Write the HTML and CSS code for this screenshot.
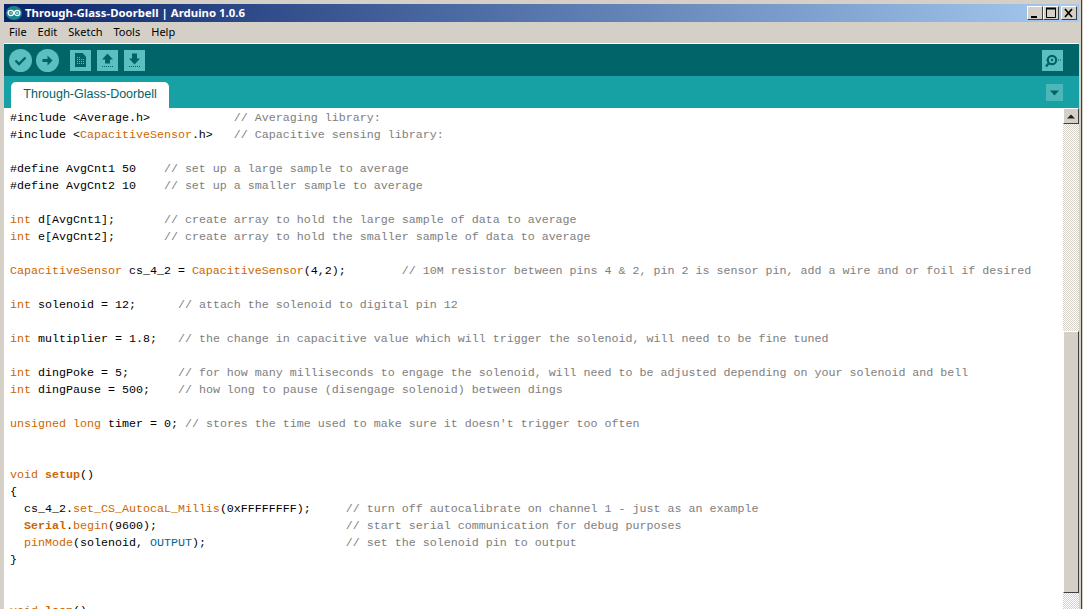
FILE: index.html
```html
<!DOCTYPE html>
<html lang="en">
<head>
<meta charset="utf-8">
<title>Through-Glass-Doorbell | Arduino 1.0.6</title>
<link rel="stylesheet" href="styles.css">
</head>
<body>
<div class="window">
  <header class="titlebar">
    <svg class="app-icon" viewBox="0 0 16 14" width="16" height="14"><ellipse cx="8" cy="7" rx="8" ry="7" fill="#17868a"/><circle cx="4.800" cy="7" r="2.700" fill="none" stroke="#fff" stroke-width="1.200"/><circle cx="11.200" cy="7" r="2.700" fill="none" stroke="#fff" stroke-width="1.200"/><path d="M3.500 7h2.600M9.900 7h2.600M11.200 5.700v2.600" stroke="#fff" stroke-width=".8"/></svg>
    <span class="title">Through-Glass-Doorbell | Arduino 1.0.6</span>
    <div class="win-btns">
      <button class="win-btn"><svg viewBox="0 0 16 14" width="16" height="14"><rect x="4" y="10" width="6" height="2" fill="#000"/></svg></button>
      <button class="win-btn"><svg viewBox="0 0 16 14" width="16" height="14"><path d="M3.500 2.500h9v9h-9z" fill="none" stroke="#000"/><path d="M3 2.500h10" stroke="#000" stroke-width="2"/></svg></button>
      <button class="win-btn win-close"><svg viewBox="0 0 16 14" width="16" height="14"><path d="M4 3l7 8M11 3l-7 8" stroke="#000" stroke-width="1.700"/></svg></button>
    </div>
  </header>
  <nav class="menubar">
    <span class="menu-item">File</span>
    <span class="menu-item">Edit</span>
    <span class="menu-item">Sketch</span>
    <span class="menu-item">Tools</span>
    <span class="menu-item">Help</span>
  </nav>
  <div class="toolbar">
    <div class="tool tool-round"><svg viewBox="0 0 23 23" width="23" height="23"><path d="M6.500 11.500l3.500 3.500 6.500-6.500" fill="none" stroke="#00636a" stroke-width="2.400"/></svg></div>
    <div class="tool tool-round"><svg viewBox="0 0 23 23" width="23" height="23"><path d="M6.500 10h5V6.500l5 5-5 5V13h-5z" fill="#00636a"/></svg></div>
    <div class="tool tool-square tool-first"><svg viewBox="0 0 21 21" width="21" height="21"><path d="M5 3h7.500L16 6.500V17H5z" fill="#00636a"/><path d="M7 7.500h1M9 7.500h1M7 9.500h1M9 9.500h1M11 9.500h1M13 9.500h1M7 11.500h1M9 11.500h1M11 11.500h1M13 11.500h1M7 13.500h1M9 13.500h1M11 13.500h1M13 13.500h1" stroke="#5bbfc0"/></svg></div>
    <div class="tool tool-square"><svg viewBox="0 0 21 21" width="21" height="21"><path d="M10.500 3.500l5.500 6h-3v4H8v-4H5z" fill="#00636a"/><path d="M5 16.500h11" stroke="#00636a" stroke-dasharray="1 1"/></svg></div>
    <div class="tool tool-square"><svg viewBox="0 0 21 21" width="21" height="21"><path d="M8 3.500h5v5h3l-5.500 6-5.500-6h3z" fill="#00636a"/><path d="M5 16.500h11" stroke="#00636a" stroke-dasharray="1 1"/></svg></div>
    <div class="tool tool-square tool-serial"><svg viewBox="0 0 21 21" width="21" height="21"><circle cx="10" cy="10" r="4.200" fill="none" stroke="#00636a" stroke-width="2.200"/><circle cx="10" cy="10" r="1.200" fill="#00636a"/><path d="M7 13l-3 3.500" stroke="#00636a" stroke-width="2.400"/><path d="M4 10h1M16 10h1M18 10h1" stroke="#00636a"/></svg></div>
  </div>
  <div class="tabbar">
    <div class="tab">Through-Glass-Doorbell</div>
    <div class="tab-menu"><svg viewBox="0 0 17 17" width="17" height="17"><path d="M4 6.500h9l-4.500 5z" fill="#00636a"/></svg></div>
  </div>
  <main class="editor">
<pre class="code">#include &lt;Average.h&gt;            <span class="c">// Averaging library:</span>
#include &lt;<span class="k">CapacitiveSensor</span>.h&gt;   <span class="c">// Capacitive sensing library:</span>

#define AvgCnt1 50    <span class="c">// set up a large sample to average</span>
#define AvgCnt2 10    <span class="c">// set up a smaller sample to average</span>

<span class="k">int</span> d[AvgCnt1];       <span class="c">// create array to hold the large sample of data to average</span>
<span class="k">int</span> e[AvgCnt2];       <span class="c">// create array to hold the smaller sample of data to average</span>

<span class="k">CapacitiveSensor</span> cs_4_2 = <span class="k">CapacitiveSensor</span>(4,2);        <span class="c">// 10M resistor between pins 4 &amp; 2, pin 2 is sensor pin, add a wire and or foil if desired</span>

<span class="k">int</span> solenoid = 12;      <span class="c">// attach the solenoid to digital pin 12</span>

<span class="k">int</span> multiplier = 1.8;   <span class="c">// the change in capacitive value which will trigger the solenoid, will need to be fine tuned</span>

<span class="k">int</span> dingPoke = 5;       <span class="c">// for how many milliseconds to engage the solenoid, will need to be adjusted depending on your solenoid and bell</span>
<span class="k">int</span> dingPause = 500;    <span class="c">// how long to pause (disengage solenoid) between dings</span>

<span class="k">unsigned</span> <span class="k">long</span> timer = 0; <span class="c">// stores the time used to make sure it doesn't trigger too often</span>


<span class="k">void</span> <span class="k b">setup</span>()
{
  cs_4_2.<span class="k">set_CS_AutocaL_Millis</span>(0xFFFFFFFF);     <span class="c">// turn off autocalibrate on channel 1 - just as an example</span>
  <span class="k b">Serial</span>.<span class="k">begin</span>(9600);                           <span class="c">// start serial communication for debug purposes</span>
  <span class="k">pinMode</span>(solenoid, <span class="o">OUTPUT</span>);                    <span class="c">// set the solenoid pin to output</span>
}


<span class="k">void</span> <span class="k b">loop</span>()</pre>
    <div class="scrollbar">
      <button class="scroll-up"><svg viewBox="0 0 16 15" width="16" height="15"><path d="M4 9.500h8l-4-4z" fill="#222"/></svg></button>
      <div class="track track-top"></div>
      <div class="thumb"></div>
      <div class="track track-bottom"></div>
    </div>
  </main>
</div>
</body>
</html>
```
FILE: styles.css
```css
* { box-sizing: border-box; }
html, body { margin: 0; height: 100%; overflow: hidden; background: #d4d0c8; }
.window {
  width: 1083px;
  height: 609px;
  padding: 4px 4px 0 4px;
  display: flex;
  flex-direction: column;
  background: #d4d0c8;
  position: relative;
  overflow: hidden;
}
.window::after {
  content: "";
  position: absolute;
  top: 0; bottom: 0; right: 1px;
  width: 1px;
  background: #404040;
}
.titlebar {
  height: 18px;
  flex: none;
  display: flex;
  align-items: center;
  padding-left: 2px;
  background: linear-gradient(90deg, #0a246a 0%, #a6caf0 100%);
  color: #fff;
}
.app-icon { flex: none; }
.title {
  margin: 0 0 1px 3px;
  font: bold 11.4px "Noto Sans", sans-serif;
}
.win-btns { margin-left: auto; margin-right: 2px; display: flex; gap: 0; }
.win-btn {
  width: 16px; height: 14px; padding: 0;
  border: 1px solid;
  border-color: #fff #404040 #404040 #fff;
  background: #d4d0c8;
  display: block;
  overflow: hidden;
}
.win-btn svg { display: block; margin: -1px; }
.win-close { margin-left: 2px; }
.menubar {
  height: 21px;
  flex: none;
  display: flex;
  align-items: center;
  padding: 0 0 2px 5px;
  gap: 11px;
  font: 11px "Noto Sans", sans-serif;
  color: #000;
}
.toolbar {
  height: 33px;
  flex: none;
  border-top: 1px solid #fff;
  background: #006468;
  display: flex;
  align-items: center;
  padding-left: 5px;
}
.tool { background: #5bbfc0; flex: none; }
.tool svg { display: block; }
.tool-round { width: 23px; height: 23px; border-radius: 50%; margin-right: 4px; }
.tool-square { width: 21px; height: 21px; margin-right: 6px; }
.tool-first { margin-left: 7px; }
.tool-serial { margin-left: auto; margin-right: 16px; }
.tabbar {
  height: 32px;
  flex: none;
  background: #17a1a5;
  display: flex;
  align-items: flex-end;
  padding-left: 7px;
}
.tab {
  width: 158px;
  height: 26px;
  background: #fff;
  border-radius: 5px 5px 0 0;
  color: #006468;
  font: 12.5px/24px "Liberation Sans", sans-serif;
  text-align: center;
}
.tab-menu {
  width: 17px; height: 17px;
  background: #4db6b8;
  margin: 0 16px 7px auto;
}
.tab-menu svg { display: block; }
.editor {
  flex: 1;
  min-height: 0;
  display: flex;
  background: #fff;
}
.code {
  flex: 1;
  min-width: 0;
  margin: 0;
  padding: 2px 0 0 6px;
  overflow: hidden;
  font: 11.67px/17px "Liberation Mono", monospace;
  color: #000;
}
.c { color: #7e7e7e; }
.k { color: #cc6600; }
.b { font-weight: bold; }
.o { color: #006699; }
.scrollbar {
  width: 16px;
  flex: none;
  display: flex;
  flex-direction: column;
}
.scroll-up {
  height: 16px;
  padding: 0;
  flex: none;
  border: 1px solid;
  border-color: #fff #404040 #404040 #fff;
  background: #d4d0c8;
}
.scroll-up svg { display: block; margin: -1px; }
.track { background: repeating-conic-gradient(#d4d0c8 0 25%, #fff 0 50%) 0 0 / 2px 2px; }
.track-top { height: 207px; flex: none; }
.track-bottom { flex: 1; }
.thumb {
  height: 262px;
  flex: none;
  background: #d4d0c8;
  border: 1px solid;
  border-color: #fff #404040 #404040 #fff;
}
```
